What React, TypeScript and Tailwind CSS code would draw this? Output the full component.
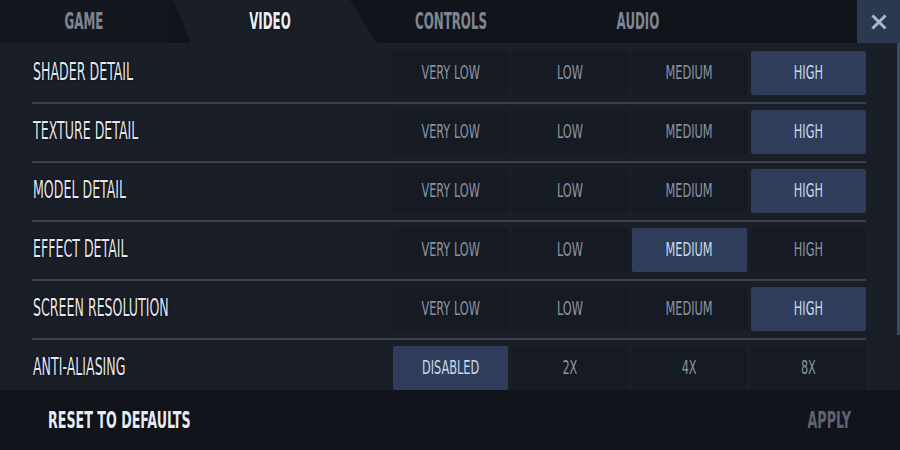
import React from "react";

const FONT = "font-['Liberation_Sans_Narrow','Arial_Narrow','DejaVu_Sans_Condensed',sans-serif]";

const rows: { label: string; opts: string[]; active: number }[] = [
  { label: "SHADER DETAIL", opts: ["VERY LOW", "LOW", "MEDIUM", "HIGH"], active: 3 },
  { label: "TEXTURE DETAIL", opts: ["VERY LOW", "LOW", "MEDIUM", "HIGH"], active: 3 },
  { label: "MODEL DETAIL", opts: ["VERY LOW", "LOW", "MEDIUM", "HIGH"], active: 3 },
  { label: "EFFECT DETAIL", opts: ["VERY LOW", "LOW", "MEDIUM", "HIGH"], active: 2 },
  { label: "SCREEN RESOLUTION", opts: ["VERY LOW", "LOW", "MEDIUM", "HIGH"], active: 3 },
  { label: "ANTI-ALIASING", opts: ["DISABLED", "2X", "4X", "8X"], active: 0 },
];

function Row({ label, opts, active, last }: { label: string; opts: string[]; active: number; last: boolean }) {
  return (
    <div className="flex flex-col">
      <div className="flex items-center h-[44px]">
        <div className="flex-1 pl-[1px] -mt-[5px]">
          <span className="inline-block scale-y-[1.75] text-[14px] leading-none text-[#e2e6ee] [text-shadow:0_0_2px_rgba(0,0,0,0.9)]">
            {label}
          </span>
        </div>
        <div className="grid grid-cols-4 gap-[4px] w-[473px] h-[44px]">
          {opts.map((o, i) => (
            <div
              key={o}
              className={`flex items-center justify-center rounded-[2px] ${
                i === active ? "bg-[#2e3e5a] text-[#ccd7ea]" : "bg-[#161a22] text-[#8b93a2]"
              }`}
            >
              <span className="inline-block scale-y-[1.55] text-[12.6px] leading-none">{o}</span>
            </div>
          ))}
        </div>
      </div>
      {!last && <div className="mt-[7px] mb-[6px] h-[2px] bg-[#3b424f]" />}
    </div>
  );
}

export default function App() {
  return (
    <div className={`w-[900px] h-[450px] flex flex-col bg-[#1a1e27] overflow-hidden ${FONT}`}>
      {/* Tabs */}
      <div className="h-[43px] flex bg-[#11141b] shrink-0">
        <div className="w-[168px] flex items-center justify-center bg-[#141720]">
          <span className="inline-block scale-y-[1.77] text-[13.2px] font-bold leading-none text-[#7e8694]">GAME</span>
        </div>
        <div className="w-[209px] flex items-center justify-center pr-[5px] bg-[#1a1e27] [clip-path:polygon(5px_0,182px_0,100%_100%,23px_100%)]">
          <span className="inline-block scale-y-[1.77] text-[13.2px] font-bold leading-none text-[#e8eef8] [text-shadow:0_0_2px_rgba(0,0,0,0.8)]">VIDEO</span>
        </div>
        <div className="w-[148px] flex items-center justify-center">
          <span className="inline-block scale-y-[1.77] text-[13.2px] font-bold leading-none text-[#7e8694]">CONTROLS</span>
        </div>
        <div className="w-[226px] flex items-center justify-center">
          <span className="inline-block scale-y-[1.77] text-[13.2px] font-bold leading-none text-[#7e8694]">AUDIO</span>
        </div>
        <div className="flex-1" />
        <div className="w-[43px] h-[43px] bg-[#2a3950] flex items-center justify-center">
          <svg width="16" height="16" viewBox="0 0 16 16">
            <path d="M2.5 2.5 L13.5 13.5 M13.5 2.5 L2.5 13.5" stroke="#aab7ca" strokeWidth="3" strokeLinecap="square" />
          </svg>
        </div>
      </div>

      {/* Content */}
      <div className="h-[347px] flex overflow-hidden shrink-0">
        <div className="flex-1 pl-[32px] pr-[31px] pt-[8px] flex flex-col">
          {rows.map((r, i) => (
            <Row key={r.label} {...r} last={i === rows.length - 1} />
          ))}
        </div>
        <div className="w-[3px] flex flex-col">
          <div className="h-[292px] bg-[#394a66]" />
        </div>
      </div>

      {/* Footer */}
      <div className="flex-1 bg-[#11141b] flex items-center justify-between pl-[48px] pr-[49px]">
        <span className="inline-block scale-y-[1.65] text-[14.1px] font-bold leading-none text-[#e6eaf2] [text-shadow:0_0_2px_rgba(0,0,0,0.8)]">
          RESET TO DEFAULTS
        </span>
        <span className="inline-block scale-y-[1.65] text-[14.1px] font-bold leading-none text-[#5d636f]">APPLY</span>
      </div>
    </div>
  );
}
